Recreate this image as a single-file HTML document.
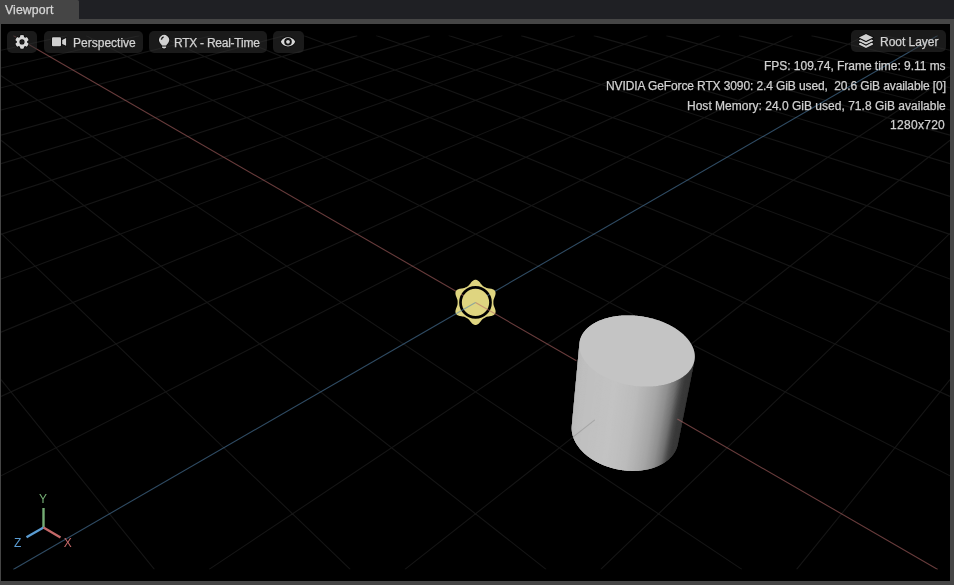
<!DOCTYPE html>
<html><head><meta charset="utf-8"><style>
html,body{margin:0;padding:0;}
body{width:954px;height:585px;background:#454545;position:relative;overflow:hidden;font-family:"Liberation Sans",sans-serif;}
#tabbar{position:absolute;left:0;top:0;width:954px;height:19px;background:#1f2024;}
#tab{position:absolute;left:0;top:0;width:79px;height:19px;background:#454545;border-top-right-radius:1.5px;}
#vp{position:absolute;left:1px;top:24px;width:949px;height:557px;background:#000;overflow:hidden;}
svg{position:absolute;left:0;top:0;}
.btn{position:absolute;height:22px;background:rgba(50,50,50,0.52);border-radius:5px;}
.ic *{stroke:#0a0a0a;stroke-width:1.3px;paint-order:stroke;}
.t{position:absolute;line-height:16px;white-space:pre;font-family:"Liberation Sans",sans-serif;will-change:transform;-webkit-text-stroke:0.25px currentColor;}
</style></head><body>
<div id="tabbar"></div>
<div id="tab"></div>
<div id="vp">
<svg width="949" height="557" viewBox="1 24 949 557">
<defs><clipPath id="rc"><rect x="1" y="35.6" width="949" height="533.8"/></clipPath></defs>
<g clip-path="url(#rc)">
<linearGradient id="sg" gradientUnits="userSpaceOnUse" x1="568.0" y1="405.0" x2="697.683" y2="414.068"><stop offset="0.0230" stop-color="#b0b0b0"/><stop offset="0.0460" stop-color="#bababa"/><stop offset="0.0921" stop-color="#bfbfbf"/><stop offset="0.3223" stop-color="#c3c3c3"/><stop offset="0.4758" stop-color="#bcbcbc"/><stop offset="0.5525" stop-color="#b2b2b2"/><stop offset="0.6292" stop-color="#a6a6a6"/><stop offset="0.7060" stop-color="#909090"/><stop offset="0.7674" stop-color="#727272"/><stop offset="0.8134" stop-color="#484848"/><stop offset="0.8441" stop-color="#3a3a3a"/><stop offset="0.9745" stop-color="#343434"/></linearGradient><polygon points="572.24,422.75 572.12,423.31 572.02,423.86 571.93,424.42 571.85,424.99 571.79,425.55 571.73,426.12 571.70,426.69 571.67,427.26 571.66,427.83 571.66,428.41 571.67,428.99 571.70,429.57 571.74,430.15 571.79,430.73 571.85,431.31 571.93,431.90 572.02,432.48 572.13,433.07 572.25,433.66 572.38,434.24 572.52,434.83 572.68,435.42 572.85,436.01 573.03,436.59 573.23,437.18 573.44,437.77 573.66,438.35 573.90,438.94 574.15,439.52 574.41,440.11 574.69,440.69 574.98,441.27 575.28,441.85 575.59,442.43 575.92,443.00 576.26,443.58 576.61,444.15 576.97,444.72 577.35,445.29 577.74,445.85 578.14,446.42 578.56,446.98 578.98,447.53 579.42,448.09 579.87,448.64 580.34,449.18 580.81,449.72 581.30,450.26 581.80,450.80 582.31,451.33 582.83,451.86 583.36,452.38 583.91,452.90 584.46,453.41 585.03,453.92 585.60,454.42 586.19,454.92 586.79,455.41 587.40,455.90 588.02,456.38 588.65,456.86 589.29,457.33 589.94,457.80 590.59,458.26 591.26,458.71 591.94,459.15 592.63,459.59 593.32,460.03 594.03,460.45 594.74,460.87 595.46,461.28 596.19,461.69 596.93,462.09 597.68,462.48 598.43,462.86 599.19,463.23 599.96,463.60 600.74,463.96 601.52,464.31 602.31,464.65 603.11,464.99 603.91,465.32 604.72,465.63 605.53,465.94 606.35,466.25 607.18,466.54 608.01,466.82 608.84,467.10 609.68,467.36 610.53,467.62 611.38,467.87 612.23,468.10 613.08,468.33 613.94,468.55 614.81,468.76 615.67,468.96 616.54,469.15 617.41,469.34 618.29,469.51 619.16,469.67 620.04,469.82 620.92,469.96 621.80,470.09 622.68,470.22 623.56,470.33 624.45,470.43 625.33,470.52 626.21,470.61 627.10,470.68 627.98,470.74 628.86,470.79 629.74,470.83 630.62,470.86 631.50,470.88 632.37,470.90 633.25,470.90 634.12,470.89 634.99,470.87 635.85,470.84 636.72,470.80 637.58,470.75 638.43,470.69 639.29,470.61 640.14,470.53 640.98,470.44 641.82,470.34 642.66,470.23 643.49,470.11 644.31,469.98 645.13,469.84 645.95,469.69 646.76,469.53 647.56,469.35 648.35,469.17 649.14,468.98 649.93,468.79 650.70,468.58 651.47,468.36 652.23,468.13 652.99,467.89 653.73,467.65 654.47,467.39 655.20,467.13 655.92,466.85 656.63,466.57 657.33,466.28 658.03,465.98 658.71,465.67 659.39,465.35 660.06,465.03 660.71,464.69 661.36,464.35 661.99,464.00 662.62,463.64 663.24,463.27 663.84,462.90 664.44,462.52 665.02,462.13 665.59,461.73 666.15,461.33 666.70,460.92 667.24,460.50 667.77,460.07 668.29,459.64 668.79,459.20 669.28,458.76 669.76,458.31 670.23,457.85 670.68,457.38 671.13,456.91 671.56,456.44 671.98,455.96 672.38,455.47 672.77,454.98 673.15,454.48 673.52,453.98 673.88,453.47 674.22,452.96 674.54,452.44 674.86,451.92 675.16,451.39 675.45,450.86 675.72,450.32 675.99,449.78 676.23,449.24 676.47,448.70 676.69,448.15 676.90,447.59 677.09,447.04 677.28,446.48 677.44,445.92 677.60,445.35 677.74,444.78 677.86,444.21 677.98,443.64 678.08,443.07 678.16,442.49 678.24,441.91 678.30,441.34 678.34,440.75 694.79,357.70 694.81,357.14 694.82,356.58 694.81,356.02 694.79,355.46 694.75,354.90 694.70,354.34 694.63,353.78 694.55,353.22 694.46,352.66 694.35,352.10 694.22,351.54 694.09,350.98 693.93,350.42 693.77,349.86 693.59,349.30 693.40,348.74 693.19,348.19 692.97,347.63 692.74,347.08 692.49,346.52 692.23,345.97 691.96,345.42 691.67,344.87 691.37,344.33 691.06,343.79 690.73,343.24 690.39,342.71 690.04,342.17 689.68,341.63 689.30,341.10 688.92,340.58 688.52,340.05 688.11,339.53 687.68,339.01 687.25,338.49 686.80,337.98 686.34,337.47 685.87,336.97 685.39,336.46 684.90,335.97 684.40,335.47 683.88,334.98 683.36,334.50 682.83,334.02 682.28,333.54 681.73,333.07 681.16,332.60 680.59,332.13 680.00,331.68 679.41,331.22 678.81,330.77 678.19,330.33 677.57,329.89 676.94,329.46 676.30,329.03 675.66,328.61 675.00,328.19 674.34,327.78 673.66,327.37 672.98,326.97 672.29,326.57 671.60,326.19 670.89,325.80 670.18,325.43 669.47,325.05 668.74,324.69 668.01,324.33 667.27,323.98 666.53,323.63 665.78,323.29 665.02,322.96 664.26,322.63 663.49,322.31 662.72,322.00 661.94,321.69 661.15,321.39 660.36,321.10 659.57,320.81 658.77,320.53 657.96,320.26 657.16,319.99 656.35,319.74 655.53,319.48 654.71,319.24 653.89,319.00 653.06,318.77 652.23,318.55 651.40,318.34 650.56,318.13 649.72,317.93 648.88,317.73 648.04,317.55 647.19,317.37 646.34,317.20 645.49,317.04 644.64,316.88 643.79,316.73 642.94,316.59 642.08,316.46 641.22,316.33 640.37,316.22 639.51,316.11 638.65,316.00 637.79,315.91 636.94,315.82 636.08,315.75 635.22,315.67 634.36,315.61 633.51,315.56 632.65,315.51 631.80,315.47 630.94,315.44 630.09,315.41 629.24,315.40 628.39,315.39 627.55,315.39 626.70,315.40 625.86,315.41 625.02,315.43 624.18,315.47 623.35,315.50 622.52,315.55 621.69,315.60 620.86,315.67 620.04,315.74 619.23,315.81 618.41,315.90 617.60,315.99 616.80,316.09 615.99,316.20 615.20,316.32 614.40,316.44 613.62,316.58 612.83,316.72 612.06,316.86 611.28,317.02 610.52,317.18 609.76,317.35 609.00,317.53 608.25,317.71 607.51,317.90 606.77,318.10 606.04,318.31 605.32,318.53 604.60,318.75 603.89,318.98 603.19,319.21 602.50,319.46 601.81,319.71 601.13,319.97 600.46,320.23 599.79,320.50 599.14,320.78 598.49,321.07 597.85,321.36 597.22,321.66 596.59,321.96 595.98,322.28 595.37,322.60 594.78,322.92 594.19,323.26 593.61,323.59 593.05,323.94 592.49,324.29 591.94,324.65 591.40,325.01 590.87,325.38 590.35,325.76 589.85,326.14 589.35,326.53 588.86,326.93 588.39,327.33 587.92,327.73 587.47,328.14 587.02,328.56 586.59,328.98 586.17,329.41 585.76,329.84 585.36,330.28 584.98,330.72 584.60,331.17 584.24,331.63 583.89,332.08 583.55,332.55 583.23,333.01 582.91,333.49 582.61,333.96 582.32,334.44 582.05,334.93 581.78,335.42 581.53,335.91 581.30,336.41 581.07,336.91 580.86,337.41 580.66,337.92 580.48,338.44 580.31,338.95 580.15,339.47 580.00,339.99 579.87,340.52" fill="url(#sg)"/><polygon points="694.79,357.70 694.76,358.29 694.70,358.88 678.23,441.99 678.29,441.37 678.34,440.75" fill="#373737"/><polygon points="694.75,358.39 694.69,358.98 694.62,359.57 678.13,442.71 678.22,442.10 678.28,441.48" fill="#373737"/><polygon points="694.68,359.08 694.60,359.67 694.51,360.26 678.02,443.43 678.12,442.82 678.20,442.20" fill="#373737"/><polygon points="694.59,359.77 694.49,360.36 694.38,360.94 677.88,444.14 678.00,443.54 678.10,442.92" fill="#373737"/><polygon points="694.47,360.46 694.36,361.04 694.22,361.62 677.72,444.86 677.86,444.25 677.98,443.64" fill="#373737"/><polygon points="694.33,361.14 694.20,361.72 694.05,362.30 677.54,445.56 677.69,444.96 677.83,444.36" fill="#373737"/><polygon points="694.17,361.83 694.02,362.40 693.85,362.97 677.34,446.27 677.51,445.67 677.67,445.07" fill="#373737"/><polygon points="693.99,362.50 693.81,363.07 693.62,363.64 677.12,446.97 677.31,446.37 677.48,445.78" fill="#373737"/><polygon points="693.78,363.18 693.59,363.74 693.38,364.31 676.87,447.66 677.08,447.07 677.28,446.48" fill="#373737"/><polygon points="693.55,363.84 693.34,364.41 693.11,364.97 676.61,448.35 676.84,447.77 677.05,447.18" fill="#383838"/><polygon points="693.30,364.51 693.07,365.07 692.82,365.63 676.32,449.04 676.57,448.46 676.80,447.87" fill="#383838"/><polygon points="693.02,365.17 692.77,365.73 692.50,366.28 676.02,449.72 676.28,449.14 676.53,448.56" fill="#383838"/><polygon points="692.72,365.82 692.45,366.38 692.16,366.92 675.69,450.39 675.97,449.82 676.23,449.24" fill="#383838"/><polygon points="692.40,366.47 692.11,367.02 691.80,367.56 675.34,451.06 675.64,450.49 675.92,449.92" fill="#383838"/><polygon points="692.06,367.12 691.75,367.66 691.42,368.20 674.97,451.72 675.29,451.16 675.59,450.59" fill="#383838"/><polygon points="691.69,367.75 691.36,368.29 691.01,368.82 674.58,452.37 674.92,451.82 675.23,451.26" fill="#383838"/><polygon points="691.30,368.39 690.95,368.92 690.59,369.44 674.17,453.02 674.52,452.47 674.86,451.92" fill="#383838"/><polygon points="690.89,369.01 690.52,369.54 690.14,370.06 673.74,453.66 674.11,453.12 674.46,452.57" fill="#393939"/><polygon points="690.45,369.63 690.07,370.15 689.66,370.66 673.29,454.29 673.68,453.75 674.05,453.21" fill="#393939"/><polygon points="690.00,370.24 689.59,370.75 689.17,371.26 672.82,454.91 673.22,454.39 673.61,453.85" fill="#393939"/><polygon points="689.52,370.84 689.09,371.35 688.65,371.85 672.33,455.53 672.75,455.01 673.15,454.48" fill="#393939"/><polygon points="689.02,371.44 688.57,371.94 688.11,372.43 671.82,456.14 672.26,455.62 672.68,455.10" fill="#393939"/><polygon points="688.49,372.03 688.03,372.52 687.55,373.01 671.29,456.74 671.74,456.23 672.18,455.71" fill="#393939"/><polygon points="687.95,372.61 687.47,373.09 686.97,373.57 670.74,457.33 671.21,456.83 671.66,456.32" fill="#3a3a3a"/><polygon points="687.38,373.18 686.88,373.66 686.37,374.13 670.17,457.91 670.66,457.41 671.13,456.91" fill="#3a3a3a"/><polygon points="686.79,373.74 686.28,374.21 685.75,374.68 669.58,458.48 670.08,457.99 670.57,457.50" fill="#3a3a3a"/><polygon points="686.18,374.30 685.65,374.76 685.10,375.22 668.98,459.04 669.49,458.56 670.00,458.08" fill="#3c3c3c"/><polygon points="685.55,374.84 685.00,375.30 684.44,375.75 668.35,459.59 668.88,459.12 669.40,458.65" fill="#3e3e3e"/><polygon points="684.90,375.38 684.33,375.82 683.75,376.26 667.71,460.13 668.25,459.67 668.79,459.20" fill="#404040"/><polygon points="684.23,375.90 683.65,376.34 683.04,376.77 667.04,460.66 667.61,460.21 668.16,459.75" fill="#434343"/><polygon points="683.54,376.42 682.94,376.85 682.32,377.27 666.36,461.18 666.94,460.74 667.51,460.29" fill="#454545"/><polygon points="682.83,376.92 682.21,377.35 681.57,377.76 665.66,461.68 666.26,461.25 666.84,460.81" fill="#474747"/><polygon points="682.10,377.42 681.46,377.83 680.81,378.24 664.95,462.18 665.56,461.76 666.15,461.33" fill="#4c4c4c"/><polygon points="681.35,377.90 680.69,378.31 680.03,378.70 664.21,462.66 664.84,462.25 665.45,461.83" fill="#515151"/><polygon points="680.58,378.38 679.91,378.77 679.22,379.15 663.47,463.14 664.10,462.73 664.73,462.32" fill="#565656"/><polygon points="679.79,378.84 679.10,379.22 678.40,379.60 662.70,463.60 663.35,463.20 663.99,462.81" fill="#5c5c5c"/><polygon points="678.98,379.29 678.28,379.66 677.57,380.03 661.92,464.04 662.58,463.66 663.24,463.27" fill="#616161"/><polygon points="678.16,379.73 677.44,380.09 676.71,380.45 661.12,464.48 661.80,464.11 662.47,463.73" fill="#676767"/><polygon points="677.31,380.16 676.58,380.51 675.84,380.85 660.30,464.90 661.00,464.54 661.68,464.18" fill="#6d6d6d"/><polygon points="676.45,380.57 675.71,380.91 674.95,381.25 659.47,465.31 660.18,464.96 660.87,464.61" fill="#727272"/><polygon points="675.57,380.97 674.81,381.31 674.04,381.63 658.63,465.71 659.35,465.37 660.06,465.03" fill="#757575"/><polygon points="674.68,381.36 673.90,381.68 673.12,382.00 657.77,466.09 658.50,465.77 659.22,465.43" fill="#797979"/><polygon points="673.77,381.74 672.98,382.05 672.18,382.35 656.90,466.46 657.64,466.15 658.37,465.82" fill="#7c7c7c"/><polygon points="672.84,382.11 672.04,382.41 671.22,382.70 656.01,466.82 656.76,466.52 657.51,466.20" fill="#7f7f7f"/><polygon points="671.89,382.46 671.08,382.75 670.25,383.02 655.11,467.16 655.87,466.87 656.63,466.57" fill="#838383"/><polygon points="670.93,382.80 670.11,383.07 669.27,383.34 654.19,467.49 654.97,467.21 655.74,466.92" fill="#868686"/><polygon points="669.96,383.12 669.12,383.39 668.27,383.64 653.27,467.80 654.05,467.54 654.83,467.26" fill="#8a8a8a"/><polygon points="668.97,383.43 668.12,383.69 667.26,383.93 652.33,468.10 653.13,467.85 653.92,467.58" fill="#8e8e8e"/><polygon points="667.97,383.73 667.11,383.97 666.23,384.20 651.38,468.39 652.18,468.14 652.99,467.89" fill="#919191"/><polygon points="666.95,384.01 666.08,384.24 665.20,384.46 650.41,468.66 651.23,468.43 652.04,468.19" fill="#939393"/><polygon points="665.92,384.28 665.04,384.50 664.15,384.71 649.44,468.91 650.27,468.69 651.09,468.47" fill="#959595"/><polygon points="664.88,384.54 663.99,384.75 663.08,384.94 648.45,469.15 649.29,468.95 650.12,468.73" fill="#979797"/><polygon points="663.83,384.78 662.92,384.97 662.01,385.16 647.46,469.38 648.30,469.19 649.14,468.98" fill="#9a9a9a"/><polygon points="662.76,385.01 661.85,385.19 660.92,385.36 646.45,469.59 647.31,469.41 648.16,469.22" fill="#9c9c9c"/><polygon points="661.68,385.22 660.76,385.39 659.83,385.55 645.44,469.78 646.30,469.62 647.16,469.44" fill="#9e9e9e"/><polygon points="660.59,385.42 659.66,385.57 658.72,385.72 644.42,469.96 645.29,469.81 646.15,469.65" fill="#a0a0a0"/><polygon points="659.50,385.60 658.55,385.74 657.60,385.88 643.38,470.12 644.26,469.99 645.13,469.84" fill="#a3a3a3"/><polygon points="658.39,385.77 657.44,385.90 656.48,386.02 642.34,470.27 643.23,470.15 644.11,470.01" fill="#a5a5a5"/><polygon points="657.27,385.92 656.31,386.04 655.35,386.15 641.30,470.41 642.19,470.29 643.07,470.17" fill="#a7a7a7"/><polygon points="656.14,386.06 655.18,386.17 654.20,386.26 640.24,470.52 641.14,470.42 642.03,470.31" fill="#a8a8a8"/><polygon points="655.00,386.18 654.03,386.28 653.06,386.36 639.18,470.62 640.08,470.54 640.98,470.44" fill="#a9a9a9"/><polygon points="653.86,386.29 652.88,386.37 651.90,386.44 638.11,470.71 639.02,470.64 639.92,470.55" fill="#ababab"/><polygon points="652.71,386.38 651.73,386.45 650.74,386.51 637.04,470.78 637.95,470.72 638.86,470.65" fill="#acacac"/><polygon points="651.55,386.46 650.56,386.52 649.57,386.56 635.96,470.83 636.88,470.79 637.79,470.73" fill="#adadad"/><polygon points="650.39,386.52 649.39,386.57 648.39,386.60 634.88,470.87 635.80,470.84 636.72,470.80" fill="#afafaf"/><polygon points="649.22,386.57 648.22,386.60 647.21,386.62 633.79,470.89 634.72,470.87 635.64,470.84" fill="#b0b0b0"/><polygon points="648.04,386.60 647.04,386.62 646.03,386.62 632.70,470.90 633.63,470.89 634.55,470.88" fill="#b1b1b1"/><polygon points="646.86,386.62 645.85,386.62 644.84,386.61 631.61,470.89 632.54,470.90 633.46,470.89" fill="#b3b3b3"/><polygon points="645.67,386.62 644.66,386.61 643.65,386.59 630.51,470.86 631.44,470.88 632.37,470.90" fill="#b4b4b4"/><polygon points="644.49,386.61 643.47,386.58 642.46,386.55 629.41,470.82 630.34,470.86 631.28,470.88" fill="#b5b5b5"/><polygon points="643.29,386.58 642.28,386.54 641.26,386.49 628.31,470.76 629.24,470.81 630.18,470.85" fill="#b6b6b6"/><polygon points="642.10,386.53 641.08,386.48 640.07,386.42 627.21,470.69 628.14,470.75 629.08,470.80" fill="#b7b7b7"/><polygon points="640.90,386.47 639.89,386.41 638.87,386.33 626.10,470.60 627.04,470.67 627.98,470.74" fill="#b8b8b8"/><polygon points="639.71,386.39 638.69,386.32 637.67,386.23 625.00,470.49 625.94,470.58 626.87,470.66" fill="#bababa"/><polygon points="638.51,386.30 637.49,386.21 636.47,386.11 623.89,470.37 624.83,470.47 625.77,470.57" fill="#bbbbbb"/><polygon points="637.31,386.20 636.29,386.09 635.27,385.98 622.79,470.23 623.73,470.35 624.67,470.46" fill="#bcbcbc"/><polygon points="636.11,386.08 635.09,385.96 634.07,385.83 621.69,470.08 622.63,470.21 623.56,470.33" fill="#bcbcbc"/><polygon points="634.91,385.94 633.89,385.81 632.88,385.67 620.59,469.91 621.53,470.05 622.46,470.19" fill="#bdbdbd"/><polygon points="633.71,385.79 632.70,385.65 631.68,385.50 619.49,469.73 620.43,469.88 621.36,470.03" fill="#bdbdbd"/><polygon points="632.52,385.62 631.50,385.47 630.49,385.30 618.40,469.53 619.33,469.70 620.26,469.86" fill="#bebebe"/><polygon points="631.32,385.44 630.31,385.27 629.30,385.10 617.30,469.31 618.23,469.50 619.16,469.67" fill="#bebebe"/><polygon points="630.13,385.24 629.12,385.06 628.12,384.88 616.22,469.08 617.14,469.28 618.07,469.46" fill="#bebebe"/><polygon points="628.95,385.03 627.94,384.84 626.94,384.64 615.13,468.84 616.05,469.05 616.98,469.25" fill="#bfbfbf"/><polygon points="627.76,384.81 626.76,384.60 625.76,384.39 614.05,468.58 614.97,468.80 615.89,469.01" fill="#bfbfbf"/><polygon points="626.58,384.57 625.59,384.35 624.59,384.13 612.98,468.30 613.89,468.54 614.81,468.76" fill="#c0c0c0"/><polygon points="625.41,384.31 624.42,384.09 623.43,383.85 611.91,468.02 612.82,468.26 613.73,468.50" fill="#c0c0c0"/><polygon points="624.24,384.04 623.25,383.81 622.27,383.56 610.84,467.71 611.75,467.97 612.66,468.22" fill="#c0c0c0"/><polygon points="623.08,383.76 622.10,383.51 621.12,383.25 609.79,467.39 610.69,467.67 611.59,467.93" fill="#c1c1c1"/><polygon points="621.92,383.47 620.95,383.20 619.97,382.93 608.74,467.06 609.63,467.35 610.53,467.62" fill="#c1c1c1"/><polygon points="620.77,383.16 619.80,382.88 618.84,382.60 607.70,466.72 608.58,467.01 609.47,467.30" fill="#c1c1c1"/><polygon points="619.63,382.83 618.67,382.55 617.71,382.25 606.66,466.36 607.54,466.66 608.42,466.96" fill="#c2c2c2"/><polygon points="618.50,382.50 617.54,382.20 616.59,381.89 605.63,465.98 606.51,466.30 607.38,466.61" fill="#c2c2c2"/><polygon points="617.37,382.15 616.42,381.84 615.48,381.52 604.62,465.60 605.48,465.92 606.35,466.25" fill="#c3c3c3"/><polygon points="616.26,381.78 615.32,381.46 614.38,381.13 603.61,465.19 604.46,465.54 605.33,465.87" fill="#c3c3c3"/><polygon points="615.15,381.41 614.22,381.08 613.29,380.74 602.61,464.78 603.46,465.13 604.31,465.48" fill="#c3c3c3"/><polygon points="614.05,381.02 613.13,380.68 612.21,380.33 601.62,464.35 602.46,464.72 603.31,465.07" fill="#c3c3c3"/><polygon points="612.97,380.62 612.05,380.26 611.15,379.90 600.64,463.92 601.47,464.29 602.31,464.65" fill="#c3c3c3"/><polygon points="611.89,380.20 610.99,379.84 610.09,379.47 599.67,463.46 600.50,463.85 601.33,464.22" fill="#c2c2c2"/><polygon points="610.83,379.78 609.93,379.40 609.05,379.02 598.72,463.00 599.53,463.39 600.35,463.78" fill="#c2c2c2"/><polygon points="609.78,379.34 608.89,378.96 608.02,378.57 597.77,462.52 598.58,462.93 599.39,463.33" fill="#c2c2c2"/><polygon points="608.74,378.89 607.86,378.50 607.00,378.10 596.84,462.04 597.63,462.45 598.43,462.86" fill="#c2c2c2"/><polygon points="607.71,378.43 606.85,378.03 605.99,377.62 595.92,461.54 596.70,461.96 597.49,462.38" fill="#c2c2c2"/><polygon points="606.69,377.96 605.84,377.55 605.00,377.13 595.01,461.03 595.78,461.46 596.56,461.89" fill="#c2c2c2"/><polygon points="605.69,377.47 604.85,377.05 604.02,376.63 594.12,460.50 594.88,460.95 595.65,461.38" fill="#c2c2c2"/><polygon points="604.71,376.98 603.88,376.55 603.06,376.12 593.24,459.97 593.98,460.43 594.74,460.87" fill="#c2c2c2"/><polygon points="603.73,376.48 602.92,376.04 602.12,375.59 592.37,459.43 593.11,459.89 593.85,460.35" fill="#c1c1c1"/><polygon points="602.78,375.96 601.97,375.52 601.18,375.06 591.52,458.88 592.24,459.35 592.97,459.81" fill="#c1c1c1"/><polygon points="601.83,375.44 601.04,374.98 600.27,374.52 590.68,458.31 591.39,458.79 592.11,459.26" fill="#c1c1c1"/><polygon points="600.91,374.90 600.13,374.44 599.37,373.97 589.85,457.74 590.55,458.23 591.26,458.71" fill="#c1c1c1"/><polygon points="600.00,374.36 599.23,373.89 598.48,373.41 589.05,457.16 589.73,457.65 590.43,458.14" fill="#c1c1c1"/><polygon points="599.10,373.80 598.35,373.33 597.62,372.84 588.25,456.56 588.93,457.07 589.61,457.57" fill="#c1c1c1"/><polygon points="598.22,373.24 597.49,372.76 596.77,372.27 587.48,455.96 588.14,456.47 588.81,456.98" fill="#c1c1c1"/><polygon points="597.36,372.67 596.64,372.18 595.93,371.68 586.71,455.35 587.36,455.87 588.02,456.38" fill="#c1c1c1"/><polygon points="596.51,372.09 595.81,371.59 595.12,371.09 585.97,454.74 586.60,455.26 587.25,455.78" fill="#c1c1c1"/><polygon points="595.69,371.51 595.00,371.00 594.32,370.49 585.24,454.11 585.86,454.64 586.49,455.17" fill="#c0c0c0"/><polygon points="594.88,370.91 594.20,370.40 593.54,369.88 584.53,453.48 585.13,454.01 585.75,454.55" fill="#c0c0c0"/><polygon points="594.09,370.31 593.43,369.79 592.78,369.27 583.84,452.83 584.43,453.38 585.03,453.92" fill="#c0c0c0"/><polygon points="593.31,369.70 592.67,369.17 592.04,368.64 583.16,452.18 583.73,452.74 584.32,453.28" fill="#c0c0c0"/><polygon points="592.56,369.08 591.93,368.55 591.32,368.01 582.50,451.53 583.06,452.09 583.63,452.64" fill="#c0c0c0"/><polygon points="591.82,368.45 591.21,367.92 590.62,367.38 581.86,450.87 582.40,451.43 582.96,451.99" fill="#c0c0c0"/><polygon points="591.11,367.82 590.51,367.28 589.94,366.74 581.24,450.20 581.77,450.77 582.31,451.33" fill="#c0c0c0"/><polygon points="590.41,367.19 589.83,366.64 589.27,366.09 580.63,449.52 581.15,450.10 581.67,450.67" fill="#c0c0c0"/><polygon points="589.73,366.54 589.17,365.99 588.63,365.44 580.05,448.84 580.54,449.42 581.05,449.99" fill="#c0c0c0"/><polygon points="589.08,365.90 588.53,365.34 588.01,364.78 579.48,448.15 579.96,448.74 580.45,449.32" fill="#c0c0c0"/><polygon points="588.44,365.24 587.91,364.68 587.40,364.12 578.93,447.46 579.40,448.05 579.87,448.64" fill="#bfbfbf"/><polygon points="587.82,364.58 587.32,364.02 586.82,363.45 578.40,446.77 578.85,447.36 579.31,447.95" fill="#bfbfbf"/><polygon points="587.23,363.92 586.74,363.35 586.26,362.78 577.89,446.06 578.32,446.66 578.77,447.25" fill="#bfbfbf"/><polygon points="586.65,363.25 586.18,362.68 585.72,362.10 577.40,445.36 577.82,445.96 578.25,446.56" fill="#bfbfbf"/><polygon points="586.10,362.58 585.64,362.00 585.20,361.43 576.93,444.65 577.33,445.25 577.74,445.85" fill="#bfbfbf"/><polygon points="585.56,361.90 585.13,361.32 584.70,360.74 576.48,443.94 576.86,444.54 577.26,445.15" fill="#bfbfbf"/><polygon points="585.05,361.22 584.63,360.64 584.23,360.06 576.04,443.22 576.41,443.83 576.79,444.44" fill="#bfbfbf"/><polygon points="584.56,360.54 584.16,359.95 583.77,359.37 575.63,442.50 575.98,443.11 576.34,443.72" fill="#bfbfbf"/><polygon points="584.09,359.85 583.71,359.26 583.34,358.68 575.24,441.78 575.57,442.39 575.92,443.00" fill="#bfbfbf"/><polygon points="583.64,359.16 583.28,358.57 582.93,357.98 574.87,441.05 575.18,441.67 575.51,442.28" fill="#bebebe"/><polygon points="583.22,358.47 582.87,357.88 582.54,357.29 574.51,440.33 574.81,440.94 575.12,441.56" fill="#bebebe"/><polygon points="582.81,357.78 582.48,357.18 582.17,356.59 574.18,439.60 574.46,440.22 574.76,440.83" fill="#bebebe"/><polygon points="582.43,357.08 582.12,356.49 581.83,355.89 573.87,438.87 574.13,439.49 574.41,440.11" fill="#bdbdbd"/><polygon points="582.07,356.38 581.78,355.79 581.50,355.19 573.58,438.13 573.83,438.76 574.09,439.38" fill="#bdbdbd"/><polygon points="581.73,355.68 581.46,355.09 581.20,354.49 573.31,437.40 573.54,438.02 573.78,438.65" fill="#bdbdbd"/><polygon points="581.41,354.98 581.16,354.39 580.92,353.79 573.06,436.67 573.27,437.29 573.50,437.91" fill="#bdbdbd"/><polygon points="581.12,354.28 580.88,353.69 580.67,353.09 572.83,435.93 573.02,436.56 573.23,437.18" fill="#bcbcbc"/><polygon points="580.84,353.58 580.63,352.98 580.43,352.39 572.62,435.20 572.80,435.82 572.99,436.45" fill="#bcbcbc"/><polygon points="580.59,352.88 580.40,352.28 580.22,351.69 572.43,434.46 572.59,435.09 572.76,435.71" fill="#bcbcbc"/><polygon points="580.36,352.18 580.19,351.58 580.03,350.99 572.26,433.73 572.40,434.35 572.56,434.98" fill="#bcbcbc"/><polygon points="580.16,351.48 580.00,350.88 579.86,350.29 572.12,433.00 572.24,433.62 572.38,434.24" fill="#bcbcbc"/><polygon points="579.98,350.78 579.84,350.18 579.71,349.59 571.99,432.26 572.09,432.89 572.22,433.51" fill="#bcbcbc"/><polygon points="579.81,350.08 579.69,349.48 579.59,348.89 571.88,431.53 571.97,432.15 572.07,432.78" fill="#bbbbbb"/><polygon points="579.68,349.38 579.57,348.78 579.49,348.19 571.80,430.80 571.87,431.42 571.95,432.04" fill="#bbbbbb"/><polygon points="579.56,348.68 579.48,348.09 579.41,347.50 571.73,430.08 571.78,430.69 571.85,431.31" fill="#bbbbbb"/><polygon points="579.46,347.98 579.40,347.40 579.35,346.81 571.69,429.35 571.72,429.97 571.77,430.59" fill="#bbbbbb"/><polygon points="579.39,347.29 579.35,346.70 579.32,346.12 571.66,428.63 571.68,429.24 571.71,429.86" fill="#bbbbbb"/><polygon points="579.34,346.60 579.32,346.01 579.31,345.43 571.66,427.91 571.66,428.52 571.68,429.13" fill="#bbbbbb"/><polygon points="579.31,345.91 579.31,345.33 579.31,344.75 571.67,427.19 571.66,427.80 571.66,428.41" fill="#bbbbbb"/><polygon points="579.31,345.22 579.32,344.64 579.35,344.06 571.71,426.47 571.68,427.08 571.66,427.69" fill="#bbbbbb"/><polygon points="579.32,344.54 579.35,343.96 579.40,343.39 571.77,425.76 571.72,426.37 571.68,426.97" fill="#bbbbbb"/><polygon points="579.36,343.86 579.41,343.29 579.47,342.71 571.84,425.06 571.78,425.66 571.72,426.26" fill="#bbbbbb"/><polygon points="579.42,343.18 579.49,342.61 579.57,342.04 571.94,424.35 571.86,424.95 571.79,425.55" fill="#bbbbbb"/><polygon points="579.50,342.51 579.58,341.94 579.69,341.38 572.06,423.65 571.95,424.25 571.87,424.84" fill="#bbbbbb"/><polygon points="579.60,341.84 579.71,341.28 579.82,340.71 572.19,422.96 572.07,423.55 571.97,424.14" fill="#bbbbbb"/><polygon points="579.73,341.18 579.80,340.85 579.87,340.52 572.24,422.75 572.16,423.10 572.09,423.44" fill="#bcbcbc"/>
<polygon points="685.19,375.14 684.61,375.61 684.00,376.08 683.38,376.53 682.75,376.98 682.10,377.42 681.43,377.85 680.75,378.27 680.05,378.69 679.34,379.09 678.62,379.49 677.88,379.87 677.12,380.25 676.35,380.62 675.57,380.97 674.78,381.32 673.97,381.66 673.15,381.99 672.32,382.30 671.47,382.61 670.61,382.91 669.74,383.19 668.86,383.47 667.97,383.73 667.07,383.98 666.15,384.22 665.23,384.46 664.30,384.68 663.36,384.88 662.40,385.08 661.44,385.27 660.47,385.44 659.50,385.60 658.51,385.75 657.52,385.89 656.52,386.02 655.51,386.13 654.50,386.23 653.48,386.32 652.45,386.40 651.42,386.47 650.39,386.52 649.35,386.57 648.30,386.60 647.25,386.62 646.20,386.62 645.15,386.62 644.09,386.60 643.03,386.57 641.97,386.52 640.90,386.47 639.84,386.40 638.77,386.32 637.71,386.23 636.64,386.13 635.58,386.02 634.51,385.89 633.45,385.75 632.38,385.60 631.32,385.44 630.27,385.27 629.21,385.08 628.16,384.88 627.11,384.68 626.06,384.46 625.02,384.22 623.98,383.98 622.95,383.73 621.92,383.47 620.90,383.19 619.88,382.91 618.88,382.61 617.87,382.30 616.88,381.99 615.89,381.66 614.91,381.32 613.93,380.97 612.97,380.62 612.01,380.25 611.06,379.87 610.13,379.49 609.20,379.09 608.28,378.69 607.37,378.27 606.47,377.85 605.58,377.42 604.71,376.98 603.84,376.53 602.99,376.08 602.15,375.61 601.32,375.14 600.50,374.66 599.70,374.17 598.90,373.68 598.12,373.18 597.36,372.67 596.61,372.16 595.87,371.64 595.15,371.11 594.44,370.58 593.74,370.04 593.06,369.49 592.39,368.94 591.74,368.39 591.11,367.82 590.49,367.26 589.88,366.69 589.29,366.11 588.72,365.53 588.16,364.95 587.62,364.36 587.10,363.77 586.59,363.18 586.10,362.58 585.62,361.98 585.16,361.37 584.72,360.77 584.30,360.16 583.89,359.54 583.50,358.93 583.12,358.32 582.77,357.70 582.43,357.08 582.11,356.46 581.80,355.84 581.51,355.22 581.24,354.59 580.99,353.97 580.76,353.35 580.54,352.72 580.34,352.10 580.16,351.48 579.99,350.85 579.85,350.23 579.72,349.61 579.61,348.99 579.51,348.37 579.44,347.75 579.38,347.14 579.34,346.52 579.31,345.91 579.31,345.30 579.32,344.69 579.34,344.09 579.39,343.48 579.45,342.88 579.53,342.29 579.63,341.69 579.74,341.10 579.87,340.52 580.02,339.93 580.18,339.35 580.36,338.78 580.56,338.21 580.77,337.64 581.00,337.08 581.25,336.52 581.51,335.97 581.78,335.42 582.08,334.87 582.39,334.34 582.71,333.80 583.05,333.28 583.41,332.75 583.78,332.24 584.16,331.73 584.56,331.22 584.98,330.72 585.41,330.23 585.85,329.75 586.31,329.27 586.78,328.79 587.27,328.33 587.77,327.87 588.28,327.42 588.81,326.97 589.35,326.53 589.90,326.10 590.47,325.68 591.05,325.26 591.64,324.85 592.24,324.45 592.86,324.06 593.49,323.67 594.13,323.29 594.78,322.92 595.44,322.56 596.11,322.21 596.80,321.86 597.50,321.52 598.20,321.20 598.92,320.87 599.65,320.56 600.38,320.26 601.13,319.97 601.88,319.68 602.65,319.40 603.43,319.13 604.21,318.87 605.00,318.62 605.80,318.38 606.61,318.15 607.43,317.93 608.25,317.71 609.09,317.51 609.93,317.31 610.77,317.13 611.63,316.95 612.49,316.78 613.36,316.62 614.23,316.47 615.11,316.33 615.99,316.20 616.88,316.08 617.78,315.97 618.68,315.87 619.59,315.78 620.50,315.70 621.41,315.62 622.33,315.56 623.26,315.51 624.18,315.47 625.11,315.43 626.05,315.41 626.98,315.39 627.92,315.39 628.87,315.39 629.81,315.41 630.76,315.43 631.70,315.47 632.65,315.51 633.60,315.56 634.55,315.62 635.51,315.70 636.46,315.78 637.41,315.87 638.37,315.97 639.32,316.08 640.27,316.20 641.22,316.33 642.18,316.47 643.12,316.62 644.07,316.78 645.02,316.95 645.97,317.13 646.91,317.31 647.85,317.51 648.79,317.71 649.72,317.93 650.65,318.15 651.58,318.38 652.51,318.62 653.43,318.87 654.34,319.13 655.26,319.40 656.16,319.68 657.07,319.97 657.96,320.26 658.86,320.56 659.74,320.87 660.63,321.20 661.50,321.52 662.37,321.86 663.23,322.21 664.09,322.56 664.94,322.92 665.78,323.29 666.61,323.67 667.44,324.06 668.25,324.45 669.06,324.85 669.87,325.26 670.66,325.68 671.44,326.10 672.22,326.53 672.98,326.97 673.74,327.42 674.48,327.87 675.22,328.33 675.94,328.79 676.66,329.27 677.36,329.75 678.06,330.23 678.74,330.72 679.41,331.22 680.07,331.73 680.72,332.24 681.35,332.75 681.98,333.28 682.59,333.80 683.18,334.34 683.77,334.87 684.34,335.42 684.90,335.97 685.45,336.52 685.98,337.08 686.50,337.64 687.00,338.21 687.49,338.78 687.97,339.35 688.43,339.93 688.87,340.52 689.30,341.10 689.72,341.69 690.12,342.29 690.51,342.88 690.88,343.48 691.23,344.09 691.57,344.69 691.89,345.30 692.20,345.91 692.49,346.52 692.76,347.14 693.02,347.75 693.26,348.37 693.48,348.99 693.69,349.61 693.88,350.23 694.05,350.85 694.21,351.48 694.35,352.10 694.47,352.72 694.57,353.35 694.66,353.97 694.72,354.59 694.77,355.22 694.80,355.84 694.82,356.46 694.82,357.08 694.79,357.70 694.75,358.32 694.70,358.93 694.62,359.54 694.53,360.16 694.41,360.77 694.28,361.37 694.13,361.98 693.97,362.58 693.78,363.18 693.58,363.77 693.36,364.36 693.12,364.95 692.86,365.53 692.58,366.11 692.29,366.69 691.98,367.26 691.65,367.82 691.30,368.39 690.94,368.94 690.55,369.49 690.15,370.04 689.73,370.58 689.30,371.11 688.84,371.64 688.37,372.16 687.89,372.67 687.38,373.18 686.86,373.68 686.32,374.17 685.77,374.66" fill="#c4c4c4"/>
<path d="M884.02 35.60L950.00 50.25M66.98 35.60L1.00 50.25M811.45 35.60L950.00 68.03M139.55 35.60L1.00 68.03M738.88 35.60L950.00 87.84M212.12 35.60L1.00 87.84M666.32 35.60L950.00 110.05M284.68 35.60L1.00 110.05M593.75 35.60L950.00 135.12M357.25 35.60L1.00 135.12M521.18 35.60L950.00 163.66M429.82 35.60L1.00 163.66M448.62 35.60L950.00 196.42M502.38 35.60L1.00 196.42M376.05 35.60L950.00 234.42M574.95 35.60L1.00 234.42M303.48 35.60L950.00 279.03M647.52 35.60L1.00 279.03M230.92 35.60L950.00 332.15M720.08 35.60L1.00 332.15M158.35 35.60L950.00 396.44M792.65 35.60L1.00 396.44M85.78 35.60L633.04 314.39M693.92 345.40L950.00 475.86M865.22 35.60L1.00 475.86M1.00 75.80L741.94 569.40M950.00 75.80L209.06 569.40M1.00 140.25L546.10 569.40M950.00 140.25L691.21 343.99M594.84 419.86L404.90 569.40M1.00 233.33L350.26 569.40M950.00 233.33L600.74 569.40M1.00 379.60L154.41 569.40M950.00 379.60L796.59 569.40" stroke="#555" stroke-opacity="0.245" stroke-width="1.1" fill="none"/>
<path d="M13.22 35.60L475.50 302.50" stroke="#b66767" stroke-opacity="0.57" stroke-width="1.1" fill="none"/>
<path d="M937.78 35.60L475.50 302.50" stroke="#5284ae" stroke-opacity="0.57" stroke-width="1.1" fill="none"/>
<path d="M493.40 302.40L493.40 301.93L493.40 301.46L493.42 300.99L493.48 300.51L493.56 300.02L493.69 299.52L493.85 299.00L494.05 298.46L494.27 297.89L494.51 297.31L494.76 296.70L494.99 296.07L495.21 295.42L495.39 294.77L495.52 294.11L495.58 293.46L495.58 292.82L495.49 292.21L495.33 291.64L495.07 291.10L494.74 290.61L494.32 290.18L493.83 289.80L493.29 289.48L492.69 289.21L492.05 288.99L491.40 288.82L490.73 288.69L490.07 288.58L489.42 288.48L488.79 288.40L488.19 288.31L487.62 288.21L487.09 288.09L486.59 287.95L486.12 287.78L485.68 287.58L485.26 287.37L484.85 287.13L484.45 286.90L484.04 286.67L483.64 286.43L483.24 286.17L482.85 285.89L482.47 285.57L482.10 285.21L481.73 284.81L481.36 284.37L480.98 283.89L480.59 283.39L480.19 282.87L479.76 282.35L479.31 281.84L478.83 281.36L478.33 280.92L477.80 280.54L477.25 280.22L476.67 279.99L476.09 279.85L475.50 279.80L474.91 279.85L474.33 279.99L473.75 280.22L473.20 280.54L472.67 280.92L472.17 281.36L471.69 281.84L471.24 282.35L470.81 282.87L470.41 283.39L470.02 283.89L469.64 284.37L469.27 284.81L468.90 285.21L468.53 285.57L468.15 285.89L467.76 286.17L467.36 286.43L466.96 286.67L466.55 286.90L466.15 287.13L465.74 287.37L465.32 287.58L464.88 287.78L464.41 287.95L463.91 288.09L463.38 288.21L462.81 288.31L462.21 288.40L461.58 288.48L460.93 288.58L460.27 288.69L459.60 288.82L458.95 288.99L458.31 289.21L457.71 289.48L457.17 289.80L456.68 290.18L456.26 290.61L455.93 291.10L455.67 291.64L455.51 292.21L455.42 292.82L455.42 293.46L455.48 294.11L455.61 294.77L455.79 295.42L456.01 296.07L456.24 296.70L456.49 297.31L456.73 297.89L456.95 298.46L457.15 299.00L457.31 299.52L457.44 300.02L457.52 300.51L457.58 300.99L457.60 301.46L457.60 301.93L457.60 302.40L457.60 302.87L457.60 303.34L457.58 303.81L457.52 304.29L457.44 304.78L457.31 305.28L457.15 305.80L456.95 306.34L456.73 306.91L456.49 307.49L456.24 308.10L456.01 308.73L455.79 309.38L455.61 310.03L455.48 310.69L455.42 311.34L455.42 311.98L455.51 312.59L455.67 313.16L455.93 313.70L456.26 314.19L456.68 314.62L457.17 315.00L457.71 315.32L458.31 315.59L458.95 315.81L459.60 315.98L460.27 316.11L460.93 316.22L461.58 316.32L462.21 316.40L462.81 316.49L463.38 316.59L463.91 316.71L464.41 316.85L464.88 317.02L465.32 317.22L465.74 317.43L466.15 317.67L466.55 317.90L466.96 318.13L467.36 318.37L467.76 318.63L468.15 318.91L468.53 319.23L468.90 319.59L469.27 319.99L469.64 320.43L470.02 320.91L470.41 321.41L470.81 321.93L471.24 322.45L471.69 322.96L472.17 323.44L472.67 323.88L473.20 324.26L473.75 324.58L474.33 324.81L474.91 324.95L475.50 325.00L476.09 324.95L476.67 324.81L477.25 324.58L477.80 324.26L478.33 323.88L478.83 323.44L479.31 322.96L479.76 322.45L480.19 321.93L480.59 321.41L480.98 320.91L481.36 320.43L481.73 319.99L482.10 319.59L482.47 319.23L482.85 318.91L483.24 318.63L483.64 318.37L484.04 318.13L484.45 317.90L484.85 317.67L485.26 317.43L485.68 317.22L486.12 317.02L486.59 316.85L487.09 316.71L487.62 316.59L488.19 316.49L488.79 316.40L489.42 316.32L490.07 316.22L490.73 316.11L491.40 315.98L492.05 315.81L492.69 315.59L493.29 315.32L493.83 315.00L494.32 314.62L494.74 314.19L495.07 313.70L495.33 313.16L495.49 312.59L495.58 311.98L495.58 311.34L495.52 310.69L495.39 310.03L495.21 309.38L494.99 308.73L494.76 308.10L494.51 307.49L494.27 306.91L494.05 306.34L493.85 305.80L493.69 305.28L493.56 304.78L493.48 304.29L493.42 303.81L493.40 303.34L493.40 302.87ZM491.85 302.40A16.35 16.35 0 1 0 459.15 302.40A16.35 16.35 0 1 0 491.85 302.40ZM489.15 302.40A13.65 13.65 0 1 0 461.85 302.40A13.65 13.65 0 1 0 489.15 302.40Z" fill="#dfd580" fill-rule="evenodd"/>
<path d="M475.50 302.50L576.40 360.76M677.35 419.04L937.78 569.40" stroke="#b66767" stroke-opacity="0.57" stroke-width="1.1" fill="none"/>
<path d="M475.50 302.50L13.22 569.40" stroke="#5284ae" stroke-opacity="0.57" stroke-width="1.1" fill="none"/>
</g>
</svg>
</div>
<div class="btn" style="left:7px;top:31px;width:30px;"><svg class="ic" width="30" height="22" viewBox="0 0 30 22"><polygon points="20.20,10.90 20.20,10.85 20.20,10.81 20.20,10.76 20.20,10.72 20.20,10.67 20.19,10.63 20.19,10.58 20.19,10.54 20.18,10.49 20.18,10.45 20.18,10.40 20.17,10.36 20.17,10.31 20.16,10.27 20.16,10.22 20.15,10.18 20.26,10.11 20.36,10.05 20.47,9.99 20.57,9.92 20.67,9.85 20.78,9.78 20.88,9.70 20.98,9.63 21.08,9.55 21.18,9.47 21.28,9.39 21.38,9.31 21.47,9.23 21.57,9.14 21.55,9.08 21.54,9.03 21.52,8.97 21.50,8.91 21.49,8.86 21.47,8.80 21.45,8.74 21.43,8.69 21.41,8.63 21.39,8.57 21.37,8.52 21.35,8.46 21.33,8.41 21.30,8.35 21.28,8.30 21.26,8.24 21.24,8.19 21.21,8.13 21.19,8.08 21.16,8.03 21.14,7.97 21.11,7.92 21.09,7.87 21.06,7.81 21.03,7.76 21.00,7.71 20.98,7.66 20.95,7.60 20.92,7.55 20.89,7.50 20.86,7.45 20.83,7.40 20.80,7.35 20.77,7.30 20.74,7.25 20.70,7.20 20.67,7.15 20.64,7.10 20.60,7.05 20.57,7.00 20.54,6.95 20.50,6.90 20.47,6.86 20.43,6.81 20.39,6.76 20.36,6.71 20.32,6.67 20.28,6.62 20.25,6.57 20.21,6.53 20.17,6.48 20.13,6.44 20.09,6.39 20.05,6.35 20.01,6.31 19.97,6.26 19.93,6.22 19.89,6.18 19.85,6.13 19.81,6.09 19.69,6.13 19.56,6.17 19.44,6.22 19.33,6.26 19.21,6.31 19.09,6.36 18.98,6.41 18.86,6.46 18.75,6.51 18.64,6.57 18.53,6.62 18.42,6.68 18.31,6.74 18.20,6.80 18.17,6.77 18.13,6.75 18.09,6.72 18.06,6.69 18.02,6.67 17.98,6.64 17.95,6.61 17.91,6.59 17.87,6.56 17.83,6.54 17.79,6.51 17.76,6.49 17.72,6.47 17.68,6.44 17.64,6.42 17.60,6.40 17.56,6.37 17.52,6.35 17.48,6.33 17.44,6.31 17.40,6.29 17.36,6.27 17.32,6.25 17.28,6.23 17.24,6.21 17.20,6.19 17.16,6.17 17.12,6.15 17.07,6.13 17.03,6.11 16.99,6.10 16.95,6.08 16.95,5.96 16.95,5.83 16.94,5.71 16.93,5.58 16.93,5.46 16.92,5.33 16.90,5.21 16.89,5.08 16.87,4.96 16.85,4.83 16.83,4.71 16.81,4.58 16.79,4.46 16.76,4.33 16.70,4.32 16.65,4.30 16.59,4.29 16.53,4.27 16.47,4.26 16.41,4.25 16.36,4.24 16.30,4.22 16.24,4.21 16.18,4.20 16.12,4.19 16.06,4.18 16.01,4.17 15.95,4.17 15.89,4.16 15.83,4.15 15.77,4.14 15.71,4.14 15.65,4.13 15.59,4.13 15.53,4.12 15.47,4.12 15.42,4.11 15.36,4.11 15.30,4.11 15.24,4.10 15.18,4.10 15.12,4.10 15.06,4.10 15.00,4.10 14.94,4.10 14.88,4.10 14.82,4.10 14.76,4.10 14.70,4.11 14.64,4.11 14.58,4.11 14.53,4.12 14.47,4.12 14.41,4.13 14.35,4.13 14.29,4.14 14.23,4.14 14.17,4.15 14.11,4.16 14.05,4.17 13.99,4.17 13.94,4.18 13.88,4.19 13.82,4.20 13.76,4.21 13.70,4.22 13.64,4.24 13.59,4.25 13.53,4.26 13.47,4.27 13.41,4.29 13.35,4.30 13.30,4.32 13.24,4.33 13.21,4.46 13.19,4.58 13.17,4.71 13.15,4.83 13.13,4.96 13.11,5.08 13.10,5.21 13.08,5.33 13.07,5.46 13.07,5.58 13.06,5.71 13.05,5.83 13.05,5.96 13.05,6.08 13.01,6.10 12.97,6.11 12.93,6.13 12.88,6.15 12.84,6.17 12.80,6.19 12.76,6.21 12.72,6.23 12.68,6.25 12.64,6.27 12.60,6.29 12.56,6.31 12.52,6.33 12.48,6.35 12.44,6.37 12.40,6.40 12.36,6.42 12.32,6.44 12.28,6.47 12.24,6.49 12.21,6.51 12.17,6.54 12.13,6.56 12.09,6.59 12.05,6.61 12.02,6.64 11.98,6.67 11.94,6.69 11.91,6.72 11.87,6.75 11.83,6.77 11.80,6.80 11.69,6.74 11.58,6.68 11.47,6.62 11.36,6.57 11.25,6.51 11.14,6.46 11.02,6.41 10.91,6.36 10.79,6.31 10.67,6.26 10.56,6.22 10.44,6.17 10.31,6.13 10.19,6.09 10.15,6.13 10.11,6.18 10.07,6.22 10.03,6.26 9.99,6.31 9.95,6.35 9.91,6.39 9.87,6.44 9.83,6.48 9.79,6.53 9.75,6.57 9.72,6.62 9.68,6.67 9.64,6.71 9.61,6.76 9.57,6.81 9.53,6.86 9.50,6.90 9.46,6.95 9.43,7.00 9.40,7.05 9.36,7.10 9.33,7.15 9.30,7.20 9.26,7.25 9.23,7.30 9.20,7.35 9.17,7.40 9.14,7.45 9.11,7.50 9.08,7.55 9.05,7.60 9.02,7.66 9.00,7.71 8.97,7.76 8.94,7.81 8.91,7.87 8.89,7.92 8.86,7.97 8.84,8.03 8.81,8.08 8.79,8.13 8.76,8.19 8.74,8.24 8.72,8.30 8.70,8.35 8.67,8.41 8.65,8.46 8.63,8.52 8.61,8.57 8.59,8.63 8.57,8.69 8.55,8.74 8.53,8.80 8.51,8.86 8.50,8.91 8.48,8.97 8.46,9.03 8.45,9.08 8.43,9.14 8.53,9.23 8.62,9.31 8.72,9.39 8.82,9.47 8.92,9.55 9.02,9.63 9.12,9.70 9.22,9.78 9.33,9.85 9.43,9.92 9.53,9.99 9.64,10.05 9.74,10.11 9.85,10.18 9.84,10.22 9.84,10.27 9.83,10.31 9.83,10.36 9.82,10.40 9.82,10.45 9.82,10.49 9.81,10.54 9.81,10.58 9.81,10.63 9.80,10.67 9.80,10.72 9.80,10.76 9.80,10.81 9.80,10.85 9.80,10.90 9.80,10.95 9.80,10.99 9.80,11.04 9.80,11.08 9.80,11.13 9.81,11.17 9.81,11.22 9.81,11.26 9.82,11.31 9.82,11.35 9.82,11.40 9.83,11.44 9.83,11.49 9.84,11.53 9.84,11.58 9.85,11.62 9.74,11.69 9.64,11.75 9.53,11.81 9.43,11.88 9.33,11.95 9.22,12.02 9.12,12.10 9.02,12.17 8.92,12.25 8.82,12.33 8.72,12.41 8.62,12.49 8.53,12.57 8.43,12.66 8.45,12.72 8.46,12.77 8.48,12.83 8.50,12.89 8.51,12.94 8.53,13.00 8.55,13.06 8.57,13.11 8.59,13.17 8.61,13.23 8.63,13.28 8.65,13.34 8.67,13.39 8.70,13.45 8.72,13.50 8.74,13.56 8.76,13.61 8.79,13.67 8.81,13.72 8.84,13.77 8.86,13.83 8.89,13.88 8.91,13.93 8.94,13.99 8.97,14.04 9.00,14.09 9.02,14.14 9.05,14.20 9.08,14.25 9.11,14.30 9.14,14.35 9.17,14.40 9.20,14.45 9.23,14.50 9.26,14.55 9.30,14.60 9.33,14.65 9.36,14.70 9.40,14.75 9.43,14.80 9.46,14.85 9.50,14.90 9.53,14.94 9.57,14.99 9.61,15.04 9.64,15.09 9.68,15.13 9.72,15.18 9.75,15.23 9.79,15.27 9.83,15.32 9.87,15.36 9.91,15.41 9.95,15.45 9.99,15.49 10.03,15.54 10.07,15.58 10.11,15.62 10.15,15.67 10.19,15.71 10.31,15.67 10.44,15.63 10.56,15.58 10.67,15.54 10.79,15.49 10.91,15.44 11.02,15.39 11.14,15.34 11.25,15.29 11.36,15.23 11.47,15.18 11.58,15.12 11.69,15.06 11.80,15.00 11.83,15.03 11.87,15.05 11.91,15.08 11.94,15.11 11.98,15.13 12.02,15.16 12.05,15.19 12.09,15.21 12.13,15.24 12.17,15.26 12.21,15.29 12.24,15.31 12.28,15.33 12.32,15.36 12.36,15.38 12.40,15.40 12.44,15.43 12.48,15.45 12.52,15.47 12.56,15.49 12.60,15.51 12.64,15.53 12.68,15.55 12.72,15.57 12.76,15.59 12.80,15.61 12.84,15.63 12.88,15.65 12.93,15.67 12.97,15.69 13.01,15.70 13.05,15.72 13.05,15.84 13.05,15.97 13.06,16.09 13.07,16.22 13.07,16.34 13.08,16.47 13.10,16.59 13.11,16.72 13.13,16.84 13.15,16.97 13.17,17.09 13.19,17.22 13.21,17.34 13.24,17.47 13.30,17.48 13.35,17.50 13.41,17.51 13.47,17.53 13.53,17.54 13.59,17.55 13.64,17.56 13.70,17.58 13.76,17.59 13.82,17.60 13.88,17.61 13.94,17.62 13.99,17.63 14.05,17.63 14.11,17.64 14.17,17.65 14.23,17.66 14.29,17.66 14.35,17.67 14.41,17.67 14.47,17.68 14.53,17.68 14.58,17.69 14.64,17.69 14.70,17.69 14.76,17.70 14.82,17.70 14.88,17.70 14.94,17.70 15.00,17.70 15.06,17.70 15.12,17.70 15.18,17.70 15.24,17.70 15.30,17.69 15.36,17.69 15.42,17.69 15.47,17.68 15.53,17.68 15.59,17.67 15.65,17.67 15.71,17.66 15.77,17.66 15.83,17.65 15.89,17.64 15.95,17.63 16.01,17.63 16.06,17.62 16.12,17.61 16.18,17.60 16.24,17.59 16.30,17.58 16.36,17.56 16.41,17.55 16.47,17.54 16.53,17.53 16.59,17.51 16.65,17.50 16.70,17.48 16.76,17.47 16.79,17.34 16.81,17.22 16.83,17.09 16.85,16.97 16.87,16.84 16.89,16.72 16.90,16.59 16.92,16.47 16.93,16.34 16.93,16.22 16.94,16.09 16.95,15.97 16.95,15.84 16.95,15.72 16.99,15.70 17.03,15.69 17.07,15.67 17.12,15.65 17.16,15.63 17.20,15.61 17.24,15.59 17.28,15.57 17.32,15.55 17.36,15.53 17.40,15.51 17.44,15.49 17.48,15.47 17.52,15.45 17.56,15.43 17.60,15.40 17.64,15.38 17.68,15.36 17.72,15.33 17.76,15.31 17.79,15.29 17.83,15.26 17.87,15.24 17.91,15.21 17.95,15.19 17.98,15.16 18.02,15.13 18.06,15.11 18.09,15.08 18.13,15.05 18.17,15.03 18.20,15.00 18.31,15.06 18.42,15.12 18.53,15.18 18.64,15.23 18.75,15.29 18.86,15.34 18.98,15.39 19.09,15.44 19.21,15.49 19.33,15.54 19.44,15.58 19.56,15.63 19.69,15.67 19.81,15.71 19.85,15.67 19.89,15.62 19.93,15.58 19.97,15.54 20.01,15.49 20.05,15.45 20.09,15.41 20.13,15.36 20.17,15.32 20.21,15.27 20.25,15.23 20.28,15.18 20.32,15.13 20.36,15.09 20.39,15.04 20.43,14.99 20.47,14.94 20.50,14.90 20.54,14.85 20.57,14.80 20.60,14.75 20.64,14.70 20.67,14.65 20.70,14.60 20.74,14.55 20.77,14.50 20.80,14.45 20.83,14.40 20.86,14.35 20.89,14.30 20.92,14.25 20.95,14.20 20.98,14.14 21.00,14.09 21.03,14.04 21.06,13.99 21.09,13.93 21.11,13.88 21.14,13.83 21.16,13.77 21.19,13.72 21.21,13.67 21.24,13.61 21.26,13.56 21.28,13.50 21.30,13.45 21.33,13.39 21.35,13.34 21.37,13.28 21.39,13.23 21.41,13.17 21.43,13.11 21.45,13.06 21.47,13.00 21.49,12.94 21.50,12.89 21.52,12.83 21.54,12.77 21.55,12.72 21.57,12.66 21.47,12.57 21.38,12.49 21.28,12.41 21.18,12.33 21.08,12.25 20.98,12.17 20.88,12.10 20.78,12.02 20.67,11.95 20.57,11.88 20.47,11.81 20.36,11.75 20.26,11.69 20.15,11.62 20.16,11.58 20.16,11.53 20.17,11.49 20.17,11.44 20.18,11.40 20.18,11.35 20.18,11.31 20.19,11.26 20.19,11.22 20.19,11.17 20.20,11.13 20.20,11.08 20.20,11.04 20.20,10.99 20.20,10.95" fill="#d8d8d8"/><circle cx="15.0" cy="10.9" r="1.9" fill="#1c1c1c"/></svg></div>
<div class="btn" style="left:44px;top:31px;width:99px;"><svg class="ic" width="30" height="22" viewBox="0 0 30 22">
<rect x="8" y="6.3" width="9" height="9" rx="1" fill="#d0d0d0"/>
<polygon points="18.2,8.9 22.1,7.1 22.1,14.8 18.2,13.1" fill="#d0d0d0"/></svg></div>
<div class="btn" style="left:149px;top:31px;width:118px;"><svg class="ic" width="30" height="22" viewBox="0 0 30 22">
<path d="M11.0 11.9 A5 5 0 1 1 19.2 11.9 Q17.5 13.5 17.2 14.7 L13.0 14.7 Q12.7 13.5 11.0 11.9 Z" fill="#d0d0d0"/>
<path d="M13 15.4 H17.2 V16.5 Q15.1 18.5 13 16.5 Z" fill="#d0d0d0"/>
<path d="M12.4 8.6 Q12.8 6.6 14.6 5.9" stroke="#1c1c1c" stroke-width="1.1" fill="none"/></svg></div>
<div class="btn" style="left:273px;top:31px;width:31px;"><svg class="ic" width="31" height="22" viewBox="0 0 31 22">
<path d="M7.8 10.8 C10.2 4.6 19.8 4.6 22.2 10.8 C19.8 17 10.2 17 7.8 10.8 Z" fill="#d8d8d8"/>
<circle cx="15" cy="10.8" r="3.1" fill="#1c1c1c"/><circle cx="15" cy="10.8" r="1.9" fill="#d8d8d8"/></svg></div>
<div class="btn" style="left:851px;top:30px;width:95px;"><svg class="ic" width="30" height="22" viewBox="0 0 30 22">
<polygon points="15,3.9 22.1,7.5 15,11.1 7.9,7.5" fill="#d0d0d0"/>
<path d="M7.9 10.2 L9.5 9.4 L15 12.3 L20.5 9.4 L22.1 10.2 L22.1 11.0 L15 14.6 L7.9 11.0 Z" fill="#d0d0d0"/>
<path d="M7.9 13.6 L9.5 12.8 L15 15.7 L20.5 12.8 L22.1 13.6 L22.1 14.4 L15 18.1 L7.9 14.4 Z" fill="#d0d0d0"/></svg></div>
<span class="t" style="left:4.60px;top:1.80px;font-size:12.3px;letter-spacing:0.100px;color:#d6d6d6">Viewport</span>
<span class="t" style="left:73.20px;top:34.80px;font-size:12px;letter-spacing:0.010px;color:#d2d2d2">Perspective</span>
<span class="t" style="left:174.00px;top:34.80px;font-size:12px;letter-spacing:-0.253px;color:#d2d2d2">RTX - Real-Time</span>
<span class="t" style="left:879.60px;top:33.80px;font-size:12px;letter-spacing:-0.036px;color:#d2d2d2">Root Layer</span>
<span class="t" style="left:763.60px;top:57.60px;font-size:12px;letter-spacing:-0.029px;color:#d0d0d0">FPS: 109.74, Frame time: 9.11 ms</span>
<span class="t" style="left:605.50px;top:77.70px;font-size:12px;letter-spacing:-0.109px;color:#d0d0d0">NVIDIA GeForce RTX 3090: 2.4 GiB used,  20.6 GiB available [0]</span>
<span class="t" style="left:686.50px;top:97.60px;font-size:12px;letter-spacing:0.015px;color:#d0d0d0">Host Memory: 24.0 GiB used, 71.8 GiB available</span>
<span class="t" style="left:890.10px;top:117.40px;font-size:12px;letter-spacing:0.297px;color:#d0d0d0">1280x720</span>
<svg width="90" height="70" style="left:0;top:480px;will-change:transform;" viewBox="0 480 90 70">
<line x1="43.5" y1="527.5" x2="43.5" y2="508" stroke="#74ad74" stroke-width="2.4"/>
<line x1="43.5" y1="527.5" x2="26.5" y2="537.3" stroke="#5a9cd2" stroke-width="2.4"/>
<line x1="43.5" y1="527.5" x2="60.5" y2="537.5" stroke="#c46868" stroke-width="2.4"/>
<text x="42.9" y="503" font-size="12" fill="#74ad74" text-anchor="middle" font-family="Liberation Sans">Y</text>
<text x="17.6" y="547" font-size="12" fill="#5a9cd2" text-anchor="middle" font-family="Liberation Sans">Z</text>
<text x="67.8" y="547" font-size="12" fill="#c46868" text-anchor="middle" font-family="Liberation Sans">X</text>
</svg>
</body></html>
